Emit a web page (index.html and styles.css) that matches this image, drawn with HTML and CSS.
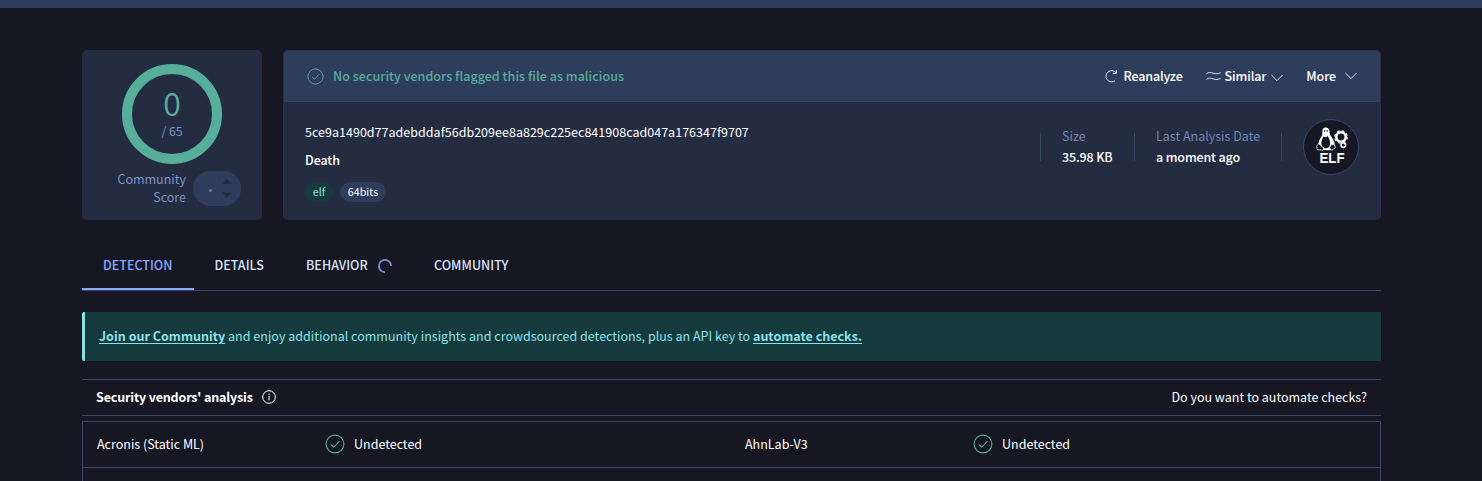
FILE: index.html
```html
<!DOCTYPE html>
<html lang="en">
<head>
<meta charset="utf-8">
<title>File report</title>
<link rel="stylesheet" href="styles.css">
</head>
<body>
<svg class="defs" width="0" height="0">
  <symbol id="check" viewBox="0 0 20 20"><circle cx="10" cy="10" r="8.9"/><path d="M5.8 10.4 8.8 13.3 14.5 7.1"/></symbol>
  <symbol id="chevron" viewBox="0 0 12 8"><path d="M.4 1 6 6.600 11.600 1"/></symbol>
</svg>
<div class="topbar"></div>
<main class="page">
  <section class="summary">
    <div class="score card">
      <div class="ring"><span class="score-value">0</span><span class="score-total">/ 65</span></div>
      <div class="community">
        <span class="community-label">Community Score</span>
        <span class="votes">
          <i class="dot"></i>
          <svg width="10" height="20" viewBox="0 0 10 20"><path d="M0 5.700 5 .7l5 5zM0 14.600h10l-5 5z"/></svg>
        </span>
      </div>
    </div>
    <div class="file card">
      <header class="file-head">
        <svg class="line-icon head-check" width="17" height="17"><use href="#check"/></svg>
        <span class="verdict">No security vendors flagged this file as malicious</span>
        <nav class="actions">
          <a class="action reanalyze"><svg class="line-icon" width="14" height="14" viewBox="0 0 14 14"><path d="M12 3.800A5.600 5.600 0 1 0 11 11.700M12.400 1.200V4.400H8.800"/></svg><span>Reanalyze</span></a>
          <a class="action similar"><svg class="line-icon" width="15" height="10" viewBox="0 0 15 10"><path d="M.5 2.600C2.600 1.200 4.500 1.300 7.200 2.200S12 3 14.500 1.700M.5 8.300C2.600 6.900 4.500 7 7.200 7.900S12 8.700 14.500 7.400"/></svg><span>Similar</span><svg class="line-icon chev" width="12" height="8"><use href="#chevron"/></svg></a>
          <a class="action more"><span>More</span><svg class="line-icon chev" width="12" height="8"><use href="#chevron"/></svg></a>
        </nav>
      </header>
      <div class="file-body">
        <div class="identity">
          <div class="hash">5ce9a1490d77adebddaf56db209ee8a829c225ec841908cad047a176347f9707</div>
          <div class="name">Death</div>
          <div class="tags"><span class="tag tag-elf">elf</span><span class="tag tag-bits">64bits</span></div>
        </div>
        <div class="meta">
          <div class="fact fact-size"><span class="fact-label">Size</span><span class="fact-value">35.98 KB</span></div>
          <div class="fact fact-date"><span class="fact-label">Last Analysis Date</span><span class="fact-value">a moment ago</span></div>
          <div class="type">
            <svg class="type-icon" width="56" height="56" viewBox="0 0 56 56">
              <circle cx="28" cy="28" r="27.500" fill="#171723" stroke="#384b72"/>
              <path fill="#fff" d="M22.700 8.500c-2.600 0-3.500 1.800-3.300 4.200.2 2.800-.6 4.300-2 6.600-1.600 2.600-2.200 4.800-2.100 7.200l2.700 4.500 9.600.2 4.300-4.700c-.2-3-1.400-5.600-3.200-8.200-1.700-2.400-2.100-3.300-2.200-5.800-.1-2.600-1.300-4-3.800-4z"/>
              <path fill="#171723" d="M20.700 17.300c1.300 1.200 2.800 1.200 4.100-.2 1.700 3.100 2.900 5.900 2.100 9.300-.9 3.300-5.800 3.900-7.800.5-1.700-3-.1-6.500 1.600-9.600zM21 11.300h1.200v1.400H21zM23.600 11.200h1.200v1.500h-1.200z"/>
              <path fill="#171723" stroke="#fff" stroke-width="1" stroke-dasharray="2.300 .5" d="M15.600 24.600c-.9 1.500-2.300 2-1.700 3.600.3 1.200-.5 2 .7 2.400l5.300.7c1.500-.9.7-2.300-.3-3.400zM27.300 26.100c-.3 2-.8 4.800.9 5 1.800.1 2.200-1.500 4.600-2.800-1.600-1.200-.8-2.500-2.100-3z"/>
              <circle cx="38" cy="18" r="4.700" fill="none" stroke="#fff" stroke-width="2.500"/>
              <circle cx="38" cy="18" r="6.300" fill="none" stroke="#fff" stroke-width="1.100" stroke-dasharray="2.700 2.250"/>
              <circle cx="40.300" cy="26.100" r="2.300" fill="#171723" stroke="#fff" stroke-width="1.600"/>
              <text class="type-label" x="29" y="43.800" text-anchor="middle" textLength="25" lengthAdjust="spacingAndGlyphs">ELF</text>
            </svg>
          </div>
        </div>
      </div>
    </div>
  </section>

  <nav class="tabs">
    <a class="tab tab-detection active"><span>DETECTION</span></a>
    <a class="tab tab-details"><span>DETAILS</span></a>
    <a class="tab tab-behavior"><span>BEHAVIOR</span><svg class="spinner" width="14" height="14" viewBox="0 0 14 14"><path d="M7 13.100A6.100 6.100 0 1 1 13.100 7"/></svg></a>
    <a class="tab tab-community"><span>COMMUNITY</span></a>
  </nav>

  <aside class="banner"><p><a class="join">Join our Community</a><span class="pitch"> and enjoy additional community insights and crowdsourced detections, plus an API key to </span><a class="automate">automate checks.</a></p></aside>

  <section class="analysis">
    <header class="analysis-head">
      <h2>Security vendors' analysis</h2>
      <svg class="info" width="14" height="14" viewBox="0 0 14 14"><circle cx="7" cy="7" r="6.300"/><path d="M7 6v4.300M7 3.600v1.200"/></svg>
      <span class="question">Do you want to automate checks?</span>
    </header>
    <div class="table">
      <div class="row">
        <span class="vendor">Acronis (Static ML)</span>
        <span class="result"><svg class="line-icon" width="20" height="20"><use href="#check"/></svg><span>Undetected</span></span>
        <span class="vendor">AhnLab-V3</span>
        <span class="result"><svg class="line-icon" width="20" height="20"><use href="#check"/></svg><span>Undetected</span></span>
      </div>
      <div class="row row-cut"></div>
    </div>
  </section>
</main>
</body>
</html>
```
FILE: styles.css
```css
* { box-sizing: border-box; }
html, body { margin: 0; height: 481px; overflow: hidden; }
body {
  background: #171723;
  color: #fff;
  font: 500 12.5px/20px "Noto Sans CJK SC", "Noto Sans", sans-serif;
  white-space: nowrap;
  display: flex;
  flex-direction: column;
}
svg { display: block; flex: none; }
.defs { position: absolute; }
.line-icon { fill: none; stroke: currentColor; stroke-width: 1.1; }

.topbar { height: 8px; background: #2f3d5c; }
.page { width: 1299px; margin: 42px 0 0 82px; }

.summary { display: flex; gap: 21px; height: 170px; }
.card { background: #242c42; border-radius: 5px; }
.score { width: 180px; padding-top: 14px; display: flex; flex-direction: column; align-items: center; color: #7d93c7; font-weight: 400; }
.ring { width: 100px; height: 100px; border: 10px solid #57ae9b; border-radius: 50%; display: flex; flex-direction: column; align-items: center; }
.score-value { font-size: 32px; line-height: 32px; margin-top: 12px; color: #57ae9b; font-weight: 350; }
.score-total { font-size: 12.3px; line-height: 18px; margin-top: 4px; }
.community { display: flex; align-items: center; gap: 7px; margin-top: 6px; align-self: flex-end; padding-right: 21px; }
.community-label { width: 72px; text-align: right; white-space: normal; line-height: 18px; }
.votes { width: 48px; height: 35px; border-radius: 18px; background: #2f3d5c; display: flex; align-items: center; justify-content: flex-end; gap: 10px; padding-right: 9px; }
.votes svg { fill: #222a40; }
.dot { width: 3px; height: 3px; border-radius: 50%; background: #747c93; margin-top: 4px; }

.file { width: 1098px; border: 1px solid #2c3855; border-color: #2c3855 #283249 #242c42; overflow: hidden; }
.file-head { height: 51px; background: #2f3d5c; border-bottom: 1px solid #344466; display: flex; align-items: center; padding: 0 23px; color: #57ae9b; }
.verdict { margin-left: 9px; letter-spacing: .04px; }
.actions { margin-left: auto; display: flex; color: #fff; gap: 24px; }
.action { display: flex; align-items: center; letter-spacing: -.12px; }
.action svg { stroke: #dfe4ef; stroke-width: 1; }
.reanalyze { letter-spacing: -.15px; }
.reanalyze svg { margin-right: 6px; }
.similar { margin-left: -1px; }
.similar svg:first-child { margin-right: 4px; }
.similar .chev { margin: 3px 0 0 5px; }
.more { margin-left: -1px; }
.more .chev { margin-left: 9px; }

.file-body { display: flex; justify-content: space-between; padding: 17px 21px 0; }
.identity { display: flex; flex-direction: column; padding-top: 3px; }
.hash { font-weight: 400; letter-spacing: .02px; }
.name { margin-top: 8px; letter-spacing: -.1px; }
.tags { display: flex; gap: 7px; margin-top: 12px; }
.tag { height: 20px; border-radius: 10px; font-size: 10.7px; line-height: 19px; padding: 0 7px; text-align: center; font-weight: 400; }
.tag-elf { width: 28px; background: #153b3d; color: #8be1ea; }
.tag-bits { width: 46px; background: #2f3d5c; }
.meta { display: flex; }
.fact { display: flex; flex-direction: column; padding-top: 7px; position: relative; }
.fact::before, .type::before { content: ""; width: 1px; height: 28px; background: #384868; position: absolute; left: 0; top: 14px; }
.fact-size { width: 94px; padding-left: 22px; }
.fact-date { width: 147px; padding-left: 22px; }
.fact-label { color: #7486b3; font-weight: 400; }
.fact-value { margin-top: 1px; letter-spacing: -.15px; }
.type { position: relative; padding-left: 22px; }
.type-label { font: 700 14px "Liberation Sans", sans-serif; fill: #fff; }

.tabs { margin-top: 20px; height: 51px; border-bottom: 1px solid #384568; display: flex; color: #d9e2fa; }
.tab { display: flex; align-items: center; padding: 0 21px 1px; height: 50px; letter-spacing: .02px; }
.tab-detection { width: 112px; }
.tab-details { width: 91px; padding-left: 20.5px; }
.tab-behavior { width: 128px; }
.spinner { fill: none; stroke: #718fdf; stroke-width: 1.8; margin-left: 10px; margin-top: 2px; }
.active { color: #86a8ff; position: relative; }
.active::after { content: ""; position: absolute; left: 0; right: 0; bottom: 0; height: 2px; background: #86a8ff; }

.banner { margin-top: 21px; height: 49px; background: #163b3e; border-left: 3px solid #8be1ea; border-radius: 2px 0 0 2px; display: flex; align-items: center; padding: 0 0 1px 14px; color: #8be1ea; font-weight: 400; }
.banner p { margin: 0; white-space: pre; letter-spacing: .013px; }
.banner a { font-weight: 700; text-decoration: underline; text-underline-offset: 2px; }

.analysis-head { margin-top: 18px; height: 37px; border: solid #3d4566; border-width: 1px 0; display: flex; align-items: center; padding: 0 14px 1px; }
.analysis-head h2 { margin: 0; font-size: 12.5px; line-height: 20px; font-weight: 700; letter-spacing: -.16px; }
.info { fill: none; stroke: #fff; stroke-width: 1; margin-left: 9px; }
.question { margin-left: auto; font-weight: 400; }
.table { margin-top: 5px; border: 1px solid #3d4566; border-bottom: 0; }
.row { display: grid; grid-template-columns: 228px 420px 228px 1fr; align-items: center; height: 46px; padding: 0 0 1px 14px; border-bottom: 1px solid #3d4566; font-weight: 400; }
.row-cut { height: 13px; border: 0; }
.result { display: flex; align-items: center; gap: 9px; }
.result svg { color: #57ae9b; }
```
